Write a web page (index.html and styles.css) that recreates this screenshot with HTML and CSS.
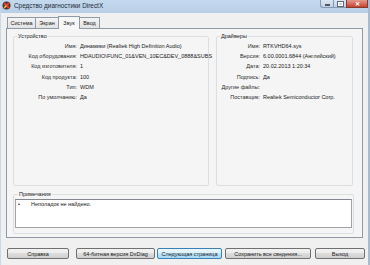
FILE: index.html
```html
<!DOCTYPE html>
<html lang="ru">
<head>
<meta charset="utf-8">
<title>Средство диагностики DirectX</title>
<link rel="stylesheet" href="styles.css">
</head>
<body>
<div class="window">
  <div class="titlebar">
    <svg class="appicon" width="9" height="9" viewBox="0 0 9 9">
      <circle cx="4.5" cy="4.5" r="4" fill="#3a3a3a"/>
      <path d="M2 2 L7 7 M7 2 L2 7" stroke="#e8402a" stroke-width="2"/>
      <path d="M2.3 6.7 L4.5 4.5" stroke="#f6b52a" stroke-width="1.4"/>
    </svg>
    <span class="title">Средство диагностики DirectX</span>
    <div class="controls">
      <span class="ctl ctl-min"><span class="bar"></span></span>
      <span class="ctl ctl-max"><span class="box"></span></span>
      <span class="ctl ctl-close">✕</span>
    </div>
  </div>
  <div class="client">
    <div class="tabs">
      <span class="tab t1">Система</span>
      <span class="tab t2">Экран</span>
      <span class="tab t3 active">Звук</span>
      <span class="tab t4">Ввод</span>
    </div>
    <div class="panel">
      <div class="groups">
        <fieldset class="group device">
          <legend>Устройство</legend>
          <div class="rows rows-device">
            <span class="lbl">Имя:</span><span class="val">Динамики (Realtek High Definition Audio)</span>
            <span class="lbl">Код оборудования:</span><span class="val">HDAUDIO\FUNC_01&amp;VEN_10EC&amp;DEV_0888&amp;SUBS</span>
            <span class="lbl">Код изготовителя:</span><span class="val">1</span>
            <span class="lbl">Код продукта:</span><span class="val">100</span>
            <span class="lbl">Тип:</span><span class="val">WDM</span>
            <span class="lbl">По умолчанию:</span><span class="val">Да</span>
          </div>
        </fieldset>
        <fieldset class="group drivers">
          <legend>Драйверы</legend>
          <div class="rows rows-drivers">
            <span class="lbl">Имя:</span><span class="val">RTKVHD64.sys</span>
            <span class="lbl">Версия:</span><span class="val">6.00.0001.6844 (Английский)</span>
            <span class="lbl">Дата:</span><span class="val">20.02.2013 1:20:34</span>
            <span class="lbl">Подпись:</span><span class="val">Да</span>
            <span class="lbl">Другие файлы:</span><span class="val"></span>
            <span class="lbl">Поставщик:</span><span class="val">Realtek Semiconductor Corp.</span>
          </div>
        </fieldset>
      </div>
      <fieldset class="group notes">
        <legend>Примечания</legend>
        <div class="notebox">
          <span class="bullet">•</span><span class="note">Неполадок не найдено.</span>
        </div>
      </fieldset>
    </div>
    <div class="buttons">
      <span class="btn b-help">Справка</span>
      <span class="btn b-64">64-битная версия DxDiag</span>
      <span class="btn b-next focus">Следующая страница</span>
      <span class="btn b-save">Сохранить все сведения...</span>
      <span class="btn b-exit">Выход</span>
    </div>
  </div>
</div>
</body>
</html>
```
FILE: styles.css
```css
* { box-sizing: border-box; }
html, body { margin: 0; padding: 0; }
body {
  width: 370px;
  height: 265px;
  overflow: hidden;
  background: #f0f0f0;
  font-family: "Liberation Sans", Arial, sans-serif;
  font-size: 5.5px;
  color: #1a1a1a;
}
.window {
  width: 370px;
  height: 265px;
  border-left: 1px solid #c9d9ea;
  border-right: 2px solid #a9bccf;
  background: #f0f0f0;
}
.titlebar {
  height: 13px;
  display: flex;
  align-items: center;
  background: linear-gradient(#c5d9ee, #b8cfe7);
  padding-left: 1px;
  position: relative;
}
.appicon { flex: none; margin-top: -2px; }
.title {
  margin-left: 3px;
  margin-top: -3px;
  font-size: 6.4px;
  color: #1b2a3a;
}
.controls {
  margin-left: auto;
  align-self: flex-start;
  display: flex;
  height: 8px;
}
.ctl {
  height: 8px;
  display: flex;
  align-items: center;
  justify-content: center;
  border: 1px solid #8399b3;
  border-top: none;
}
.ctl-min, .ctl-max {
  width: 13px;
  background: linear-gradient(#dbe6f2, #c0d2e6);
  border-right: none;
}
.ctl-min { border-radius: 0 0 0 3px; }
.ctl-min .bar { width: 5px; height: 1.5px; background: #fff; border: 0.5px solid #556; margin-top: 2px; }
.ctl-max .box { width: 5px; height: 4px; border: 1px solid #fff; outline: 0.5px solid #667; }
.ctl-close {
  width: 22px;
  background: linear-gradient(#e69a8e, #c4432f);
  color: #fff;
  font-size: 6px;
  font-weight: bold;
  border-color: #8a3a2c;
}
.client {
  padding-left: 5px;
}
.tabs {
  display: flex;
  align-items: flex-end;
  height: 15px;
  padding-left: 1px;
}
.tab {
  height: 11px;
  display: flex;
  align-items: center;
  justify-content: center;
  border: 1px solid #8e9aa6;
  border-bottom: none;
  background: linear-gradient(#f4f4f4, #e3e3e3);
  margin-right: -1px;
  color: #222;
}
.t1 { width: 29px; }
.t2 { width: 24px; }
.t3 { width: 22px; }
.t4 { width: 21px; }
.tab.active {
  height: 13px;
  background: #f7f7f7;
  position: relative;
  z-index: 1;
  margin-bottom: -1px;
  padding-bottom: 1px;
}
.panel {
  width: 357px;
  height: 210px;
  border: 1px solid #8e9aa6;
  background: #f5f5f5;
  padding: 4px 8px 0 6px;
}
.groups {
  display: flex;
  gap: 7px;
  height: 153px;
}
.group {
  margin: 0;
  padding: 0;
  border: 1px solid #dcdfe2;
  border-radius: 2px;
  min-width: 0;
}
.group legend {
  padding: 0 1px;
  margin-left: 3px;
  line-height: 7px;
  color: #1a1a1a;
}
.device { width: 196px; }
.drivers { width: 137px; }
.rows {
  display: grid;
  column-gap: 3px;
  line-height: 10.2px;
  padding-top: 1px;
  white-space: nowrap;
}
.rows-device { grid-template-columns: 63px auto; }
.rows-drivers { grid-template-columns: 43px auto; }
.lbl { text-align: right; color: #2a2a2a; }
.val { color: #1a1a1a; min-height: 10.2px; }
.notes {
  margin-top: 5px;
  height: 43px;
  padding: 1px 1px 0 1px;
}
.notebox {
  height: 29px;
  background: #fff;
  border: 1px solid #a0a4a8;
  border-top-color: #828790;
  padding: 1px 0 0 2px;
  display: flex;
  line-height: 7px;
}
.bullet { width: 13px; }
.buttons {
  display: flex;
  margin-top: 10px;
  height: 11px;
  padding-left: 1px;
}
.btn {
  height: 11px;
  display: flex;
  align-items: center;
  justify-content: center;
  border: 1px solid #707070;
  border-radius: 2px;
  background: linear-gradient(#f2f2f2 0%, #ebebeb 50%, #dddddd 50%, #cfcfcf 100%);
  color: #1a1a1a;
  white-space: nowrap;
}
.b-help { width: 62px; }
.b-64 { width: 79px; margin-left: 7px; }
.b-next { width: 65px; margin-left: 2px; }
.b-save { width: 86px; margin-left: 3px; }
.b-exit { width: 50px; margin-left: 4px; }
.btn.focus {
  border-color: #3c7fb1;
  background: linear-gradient(#eaf6fd 0%, #d9f0fc 50%, #bee6fd 50%, #a7d9f5 100%);
}
```
